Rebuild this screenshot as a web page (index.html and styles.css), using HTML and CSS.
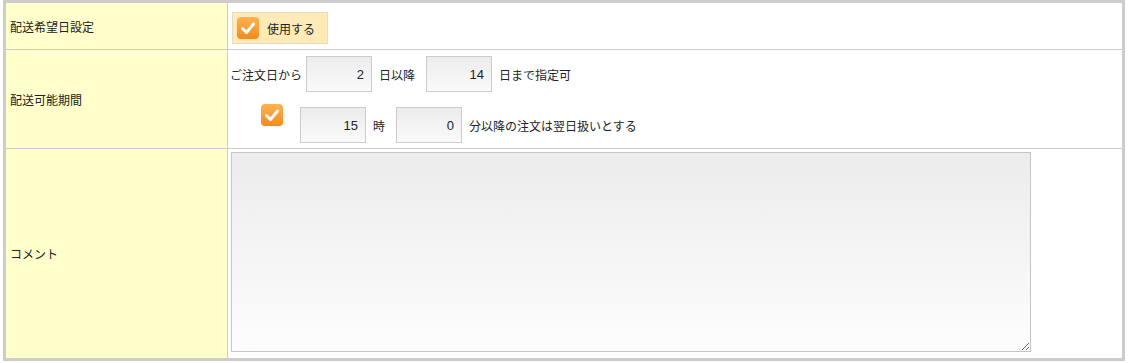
FILE: index.html
```html
<!DOCTYPE html>
<html lang="ja">
<head>
<meta charset="utf-8">
<link rel="stylesheet" href="styles.css">
</head>
<body>
<div class="frame">
  <div class="form">
    <div class="label row1">配送希望日設定</div>
    <div class="value row1 v1">
      <label class="chk-box">
        <span class="chk"><svg viewBox="0 0 22 22" width="22" height="22"><path d="M5.5 11.5 L9.5 15.5 L16.5 7" fill="none" stroke="#fff" stroke-width="3" stroke-linecap="round" stroke-linejoin="round"/></svg></span>
        <span class="chk-text">使用する</span>
      </label>
    </div>

    <div class="label row2">配送可能期間</div>
    <div class="value row2 v2">
      <div class="line line1">
        <span class="txt first">ご注文日から</span>
        <input class="num" type="text" value="2">
        <span class="txt">日以降</span>
        <input class="num" type="text" value="14">
        <span class="txt">日まで指定可</span>
      </div>
      <div class="line line2">
        <span class="chk chk-solo"><svg viewBox="0 0 22 22" width="22" height="22"><path d="M5.5 11.5 L9.5 15.5 L16.5 7" fill="none" stroke="#fff" stroke-width="3" stroke-linecap="round" stroke-linejoin="round"/></svg></span>
        <input class="num" type="text" value="15">
        <span class="txt">時</span>
        <input class="num" type="text" value="0">
        <span class="txt">分以降の注文は翌日扱いとする</span>
      </div>
    </div>

    <div class="label row3">コメント</div>
    <div class="value row3 v3">
      <textarea class="comment"></textarea>
    </div>
  </div>
</div>
</body>
</html>
```

FILE: styles.css
```css
html, body {
  margin: 0;
  padding: 0;
  background: #fff;
}
body {
  font-family: "Noto Sans CJK JP", "Noto Sans", sans-serif;
  font-size: 12px;
  color: #222;
}
.frame {
  padding: 0 3px;
}
.form {
  width: 1116px;
  border: 3px solid #cccccc;
  display: grid;
  grid-template-columns: 222px 1fr;
  grid-template-rows: 47px 99px 209px;
}
.label {
  background: #ffffcc;
  border-right: 1px solid #cccccc;
  display: flex;
  align-items: center;
  padding-left: 4px;
}
.value {
  background: #fff;
}
.row1, .row2 {
  border-bottom: 1px solid #cccccc;
}
.v1 {
  display: flex;
  align-items: flex-start;
  padding: 9px 0 0 4px;
}
.chk-box {
  display: flex;
  align-items: center;
  background: #ffeab8;
  border: 1px solid #e6dcc0;
  height: 30px;
  padding: 0 12px 0 4px;
}
.chk {
  width: 22px;
  height: 22px;
  border-radius: 4px;
  background: linear-gradient(#fcb452, #f28a1e);
  display: inline-block;
  flex: none;
}
.chk svg {
  display: block;
}
.chk-text {
  margin-left: 8px;
}
.v2 {
  padding: 6px 0 0 2px;
  display: flex;
  flex-direction: column;
  gap: 15px;
}
.line {
  display: flex;
  align-items: center;
}
.txt {
  margin-right: 11px;
}
.txt.first {
  margin-right: 4px;
}
.num {
  margin-right: 7px;
}
.line2 {
  align-items: flex-start;
  padding-left: 31px;
}
.line2 .txt {
  align-self: center;
}
.chk-solo {
  margin-top: -3px;
  margin-right: 17px;
}
.num {
  width: 66px;
  height: 36px;
  box-sizing: border-box;
  border: 1px solid #cccccc;
  background: linear-gradient(#ececec, #fafafa);
  text-align: right;
  padding: 0 7px 0 4px;
  font-family: "Liberation Sans", Arial, sans-serif;
  font-size: 13px;
  color: #222;
  outline: none;
}
.line2 .txt:nth-of-type(1) {
  margin-right: 12px;
}
.v3 {
  padding: 3px 0 0 3px;
}
.comment {
  display: block;
  width: 800px;
  height: 200px;
  box-sizing: border-box;
  border: 1px solid #c4c4c4;
  background: linear-gradient(#ececec, #fdfdfd);
  margin: 0;
  resize: both;
  font-family: inherit;
}
```
